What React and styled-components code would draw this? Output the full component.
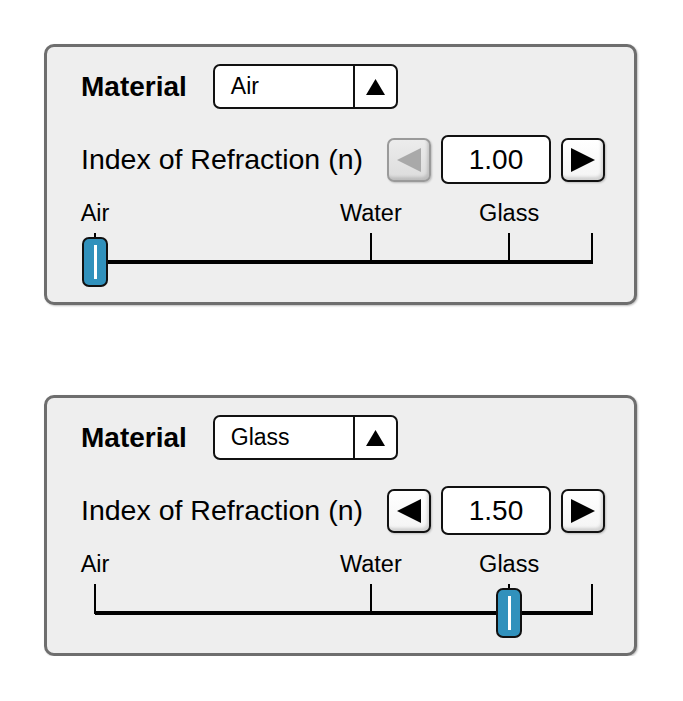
import React from "react";
import styled, { createGlobalStyle } from "styled-components";

const GlobalStyle = createGlobalStyle`
  html, body {
    margin: 0;
    padding: 0;
    background: #ffffff;
  }
  body {
    font-family: "Liberation Sans", Arial, Helvetica, sans-serif;
    color: #000;
  }
`;

const MIN = 1.0;
const MAX = 1.6;
const TRACK_LEFT = 14;
const TRACK_LEN = 497;

const posOf = (v) => TRACK_LEFT + ((v - MIN) / (MAX - MIN)) * TRACK_LEN;

const Page = styled.div`
  display: flex;
  flex-direction: column;
  gap: 90px;
  padding: 44px 0 0 44px;
`;

const Panel = styled.section`
  width: 593px;
  box-sizing: border-box;
  background: #eeeeee;
  border: 3px solid #6e6e6e;
  border-radius: 10px;
  box-shadow: 1px 1px 2px rgba(0, 0, 0, 0.25);
  padding: 17px 29px 7px 34px;
  display: flex;
  flex-direction: column;
`;

const Row = styled.div`
  display: flex;
  align-items: center;
  height: ${(p) => p.$h}px;
  margin-top: ${(p) => p.$mt || 0}px;
  gap: ${(p) => p.$gap || 0}px;
`;

const Label = styled.span`
  font-size: ${(p) => (p.$bold ? 28 : 28.5)}px;
  font-weight: ${(p) => (p.$bold ? 700 : 400)};
  line-height: 1;
  white-space: nowrap;
`;

const Select = styled.div`
  width: 185px;
  height: 45px;
  box-sizing: border-box;
  display: flex;
  background: #fff;
  border: 2px solid #111;
  border-radius: 7px;
  overflow: hidden;
`;

const SelectText = styled.div`
  flex: 1;
  display: flex;
  align-items: center;
  padding-left: 16px;
  font-size: 23px;
`;

const SelectArrow = styled.div`
  width: 41px;
  border-left: 2px solid #111;
  display: flex;
  align-items: center;
  justify-content: center;
`;

const Spinner = styled.div`
  margin-left: auto;
  display: flex;
  align-items: center;
  gap: 10px;
`;

const ArrowButton = styled.button`
  width: 44px;
  height: 44px;
  box-sizing: border-box;
  padding: 0;
  margin: 0;
  display: flex;
  align-items: center;
  justify-content: center;
  border-radius: 7px;
  border: 2px solid ${(p) => (p.disabled ? "#9a9a9a" : "#111")};
  background: ${(p) =>
    p.disabled
      ? "linear-gradient(#ececec, #dcdcdc)"
      : "linear-gradient(#ffffff, #f4f4f4)"};
  box-shadow: inset -2px -3px 3px rgba(0, 0, 0, 0.14),
    1px 1px 2px rgba(0, 0, 0, 0.2);
  cursor: ${(p) => (p.disabled ? "default" : "pointer")};
`;

const ValueBox = styled.div`
  width: 110px;
  height: 49px;
  box-sizing: border-box;
  display: flex;
  align-items: center;
  justify-content: center;
  background: #fff;
  border: 2px solid #111;
  border-radius: 7px;
  font-size: 28px;
`;

const Slider = styled.div`
  position: relative;
  height: 100px;
  margin-top: 11px;
`;

const Track = styled.div`
  position: absolute;
  left: ${TRACK_LEFT}px;
  width: ${TRACK_LEN + 1}px;
  top: 65px;
  height: 4px;
  background: #000;
`;

const Tick = styled.div`
  position: absolute;
  top: 38px;
  width: 2px;
  height: 30px;
  margin-left: -1px;
  background: #000;
`;

const TickLabel = styled.div`
  position: absolute;
  top: 7px;
  transform: translateX(-50%);
  font-size: 23.5px;
  line-height: 1;
  white-space: nowrap;
`;

const Thumb = styled.div`
  position: absolute;
  top: 42px;
  width: 26px;
  height: 50px;
  margin-left: -13px;
  box-sizing: border-box;
  background: #3191bc;
  border: 2px solid #111;
  border-radius: 7px;
  display: flex;
  align-items: center;
  justify-content: center;

  &::after {
    content: "";
    width: 3px;
    height: 34px;
    background: #fff;
  }
`;

const UpTriangle = () => (
  <svg width="19" height="16" viewBox="0 0 19 16">
    <polygon points="9.5,0 19,16 0,16" fill="#000" />
  </svg>
);

const SideTriangle = ({ dir, color }) => (
  <svg width="24" height="24" viewBox="0 0 24 24">
    {dir === "left" ? (
      <polygon points="0,12 24,0 24,24" fill={color} />
    ) : (
      <polygon points="24,12 0,0 0,24" fill={color} />
    )}
  </svg>
);

const ticks = [
  { name: "Air", v: 1.0 },
  { name: "Water", v: 1.333 },
  { name: "Glass", v: 1.5 },
  { name: "", v: 1.6 },
];

const MaterialPanel = ({ material, value }) => {
  const atMin = value <= MIN;
  const atMax = value >= MAX;
  return (
    <Panel>
      <Row $h={45} $gap={26}>
        <Label $bold>Material</Label>
        <Select>
          <SelectText>{material}</SelectText>
          <SelectArrow>
            <UpTriangle />
          </SelectArrow>
        </Select>
      </Row>
      <Row $h={49} $mt={26}>
        <Label>Index of Refraction (n)</Label>
        <Spinner>
          <ArrowButton disabled={atMin} aria-label="decrease">
            <SideTriangle dir="left" color={atMin ? "#a9a9a9" : "#000"} />
          </ArrowButton>
          <ValueBox>{value.toFixed(2)}</ValueBox>
          <ArrowButton disabled={atMax} aria-label="increase">
            <SideTriangle dir="right" color={atMax ? "#a9a9a9" : "#000"} />
          </ArrowButton>
        </Spinner>
      </Row>
      <Slider>
        {ticks.map((t) =>
          t.name ? (
            <TickLabel key={t.name} style={{ left: posOf(t.v) }}>
              {t.name}
            </TickLabel>
          ) : null
        )}
        <Track />
        {ticks.map((t) => (
          <Tick key={"t" + t.v} style={{ left: posOf(t.v) }} />
        ))}
        <Thumb style={{ left: posOf(value) }} />
      </Slider>
    </Panel>
  );
};

export default function App() {
  return (
    <>
      <GlobalStyle />
      <Page>
        <MaterialPanel material="Air" value={1.0} />
        <MaterialPanel material="Glass" value={1.5} />
      </Page>
    </>
  );
}
